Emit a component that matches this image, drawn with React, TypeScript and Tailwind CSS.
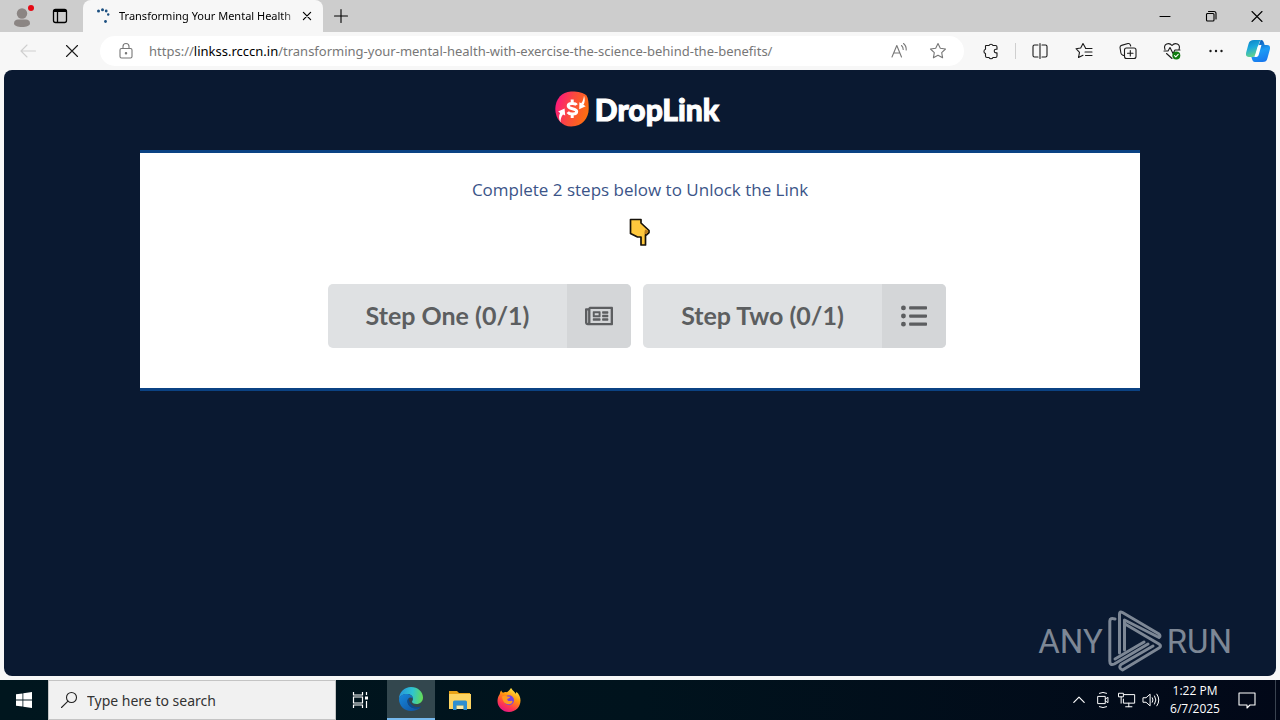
import React from 'react';
import { FaListUl, FaRegNewspaper } from 'react-icons/fa';

type IconProps = { children: React.ReactNode; size?: string };

const LineIcon: React.FC<IconProps> = ({ children, size = 'size-5' }) => (
  <svg
    viewBox="0 0 20 20"
    className={size}
    fill="none"
    stroke="currentColor"
    strokeWidth="1.1"
    strokeLinecap="round"
    strokeLinejoin="round"
    aria-hidden="true"
  >
    {children}
  </svg>
);

const star = 'M10 2.5l2.3 4.8 5.2.7-3.8 3.6.9 5.2-4.6-2.5-4.6 2.5.9-5.2L2.500 8l5.2-.7z';

const ProfileIcon = () => (
  <svg viewBox="0 0 26 26" className="size-[26px]" aria-hidden="true">
    <circle cx="12" cy="10.500" r="5.2" fill="#8b8583" />
    <path d="M4 20.500c0-3 2-4 4-4h8c2 0 4 1 4 4 0 2-3.500 3.500-8 3.500s-8-1.500-8-3.500z" fill="#8b8583" />
    <circle cx="21" cy="5" r="3" fill="#e50914" />
  </svg>
);

const Spinner = () => (
  <svg viewBox="0 0 16 16" className="size-4 shrink-0" fill="#1b4f80" aria-hidden="true">
    <circle cx="3.500" cy="3" r="1.500" />
    <circle cx="7.500" cy="1.800" r="1.500" />
    <circle cx="11.200" cy="3" r="1.400" />
    <circle cx="13.200" cy="6.500" r="1.200" />
    <circle cx="10.500" cy="13.500" r="1.400" />
  </svg>
);

const CopilotIcon = () => (
  <svg viewBox="0 0 24 24" className="size-6" aria-hidden="true">
    <defs>
      <linearGradient id="cp-a" x1="0" y1="0" x2="0.3" y2="1">
        <stop offset="0" stopColor="#0b7fc4" />
        <stop offset="0.5" stopColor="#1ba9dd" />
        <stop offset="1" stopColor="#63d28c" />
      </linearGradient>
      <linearGradient id="cp-b" x1="0.3" y1="0" x2="0.6" y2="1">
        <stop offset="0" stopColor="#0a4fae" />
        <stop offset="0.5" stopColor="#1c9bf5" />
        <stop offset="1" stopColor="#1878ee" />
      </linearGradient>
    </defs>
    <path d="M15 1c2 0 2.500 1.500 3 3l.6 2H21c3 0 3.500 2 2.700 5l-2.200 8c-.8 3-2 4-5 4H9c-2 0-2.500-1.500-3-3l-.6-2c3 0 4.200-.6 5-3.500L13 6c.6-2 .8-3.500 2-5z" fill="url(#cp-b)" />
    <path d="M8 1h7.500c-1.800.8-2.300 2.500-2.800 4.500L10.500 13c-.9 3.500-2 5-5 5H3c-3 0-3.500-2-2.700-5l2.200-8C3.300 2 5 1 8 1z" fill="url(#cp-a)" />
    <path d="M11.500 8c.3-1.200 1-2 2.200-2h1.800l-2.700 9.500c-.4 1.500-1.100 2.500-2.500 2.500H8.500z" fill="#fff" />
  </svg>
);

const DropLinkMark = () => (
  <svg viewBox="0 0 34 36" className="h-9 w-[34px]" aria-hidden="true">
    <defs>
      <linearGradient id="dl" x1="0" y1="0.2" x2="1" y2="0.5">
        <stop offset="0" stopColor="#fb1480" />
        <stop offset="0.5" stopColor="#fb4a3e" />
        <stop offset="1" stopColor="#fd6f10" />
      </linearGradient>
    </defs>
    <path d="M16 .5C22 .3 28.500 1.500 31.500 4.500c2 3 2.200 8 2.200 13.500 0 8.500-6 17.500-17.500 17.500C7 35.500.3 28 .3 18 .3 8 7 .8 16 .5z" fill="url(#dl)" />
    <path d="M29 4.500c1.200 4 1 7-.6 9.200l2.300 1.500-6.500 3 .2-7 1.800 1c1.700-2 2.500-4.300 2.800-7.700z" fill="#fff" />
    <path d="M5.500 31.500c-2-4-1.800-7-.4-9.500l-2-1.500 6.500-3 .6 7-2.200-1c-1.900 2.500-2.500 4.700-2.500 8z" fill="#fff" />
    <path d="M21.500 14c-1.200-2-8.300-2.500-8.300 1 0 3.500 8.500 2 8.500 5.500 0 3.500-7.200 3.200-9 .7M17.200 8.500v3M17.200 24v3" fill="none" stroke="#fff" strokeWidth="3" />
  </svg>
);

const PointingHand = () => (
  <svg viewBox="0 0 22 28" className="h-7 w-[22px]" role="img" aria-label="Pointing down">
    <path
      d="M1.500 1.500h10.500v3.500l8 7.500v2l-2.500 2.300h-1V27h-4.500v-8H8.500l-7-3.500z"
      fill="#ffc83d"
      stroke="#17120a"
      strokeWidth="1.700"
      strokeLinejoin="round"
    />
    <path d="M16 11.500l3.500 1.500-2 3.200-2.200-.4z" fill="#b87a1c" />
  </svg>
);

const AnyRunMark = () => (
  <svg viewBox="0 0 56 62" className="h-[62px] w-14" fill="none" stroke="currentColor" strokeWidth="3" strokeLinejoin="round" strokeLinecap="round" aria-hidden="true">
    <path d="M12.500 43V4q0-3 3-1.500L52 24q2 2 0 3.500L17.500 10v30" />
    <path d="M8 9q-5-1.500-5.200 2v40q0 5 4.500 3L41 34" />
    <path d="M8 49l29-17M46 36L14 54.500q-3 3.500 1.500 5.500L52 38q3-2 0-4L18 14" />
  </svg>
);

const EdgeIcon = () => (
  <svg viewBox="0 0 24 24" className="size-6" aria-hidden="true">
    <defs>
      <linearGradient id="ed-top" x1="0" y1="0.4" x2="1" y2="0.5">
        <stop offset="0" stopColor="#2595dc" />
        <stop offset="0.55" stopColor="#2fc4d0" />
        <stop offset="1" stopColor="#65dc55" />
      </linearGradient>
      <linearGradient id="ed-low" x1="0" y1="0" x2="1" y2="1">
        <stop offset="0" stopColor="#1688dc" />
        <stop offset="1" stopColor="#104f9d" />
      </linearGradient>
    </defs>
    <path d="M0 12C0 5 5.500 0 12 0c7 0 12 5 12 10.500 0 4-3 6.500-6.500 6.500-3 0-4.500-1.200-4.500-2.200 0-.8 1-1.200 1-3C14 9 11.500 7 8 7c-4 0-7 2-8 5z" fill="url(#ed-top)" />
    <path d="M0 12c1-3.500 4-5 7.500-5 4 0 6.500 2.500 6.500 4.800-.8-1-1.800-1.300-2.500-1.300-2 0-3 2-3 4 0 4 4 7 8.500 7 2 0 3.500-.5 4.700-1.200C19.500 23 16 24 12 24 5 24 0 18.500 0 12z" fill="url(#ed-low)" />
    <path d="M9.500 11.500c-1 .8-1.300 2-1 3.500.6 3.800 4 6.500 8.500 6.500 2 0 3.500-.5 4.700-1.300.5-.5.200-1-.4-.7-5 2-11-1.500-11.800-8z" fill="#0c4a90" />
  </svg>
);

const ExplorerIcon = () => (
  <svg viewBox="0 0 22 20" className="h-5 w-[22px]" aria-hidden="true">
    <path d="M0 1h8l2 2h11v5H0z" fill="#e8a317" />
    <path d="M0 4h22v15H0z" fill="#fcd462" />
    <path d="M4 12q0-1.500 1.500-1.500h11q1.500 0 1.500 1.500v8h-3.500v-4.500h-7V20H4z" fill="#2f8fd0" />
    <path d="M8 16h6v3H8z" fill="#fce9a6" />
  </svg>
);

const FirefoxIcon = () => (
  <svg viewBox="0 0 24 24" className="size-6" aria-hidden="true">
    <defs>
      <linearGradient id="ff" x1="0.8" y1="0" x2="0.3" y2="1">
        <stop offset="0" stopColor="#fff14f" />
        <stop offset="0.4" stopColor="#ff980e" />
        <stop offset="0.75" stopColor="#ff3750" />
        <stop offset="1" stopColor="#e31587" />
      </linearGradient>
    </defs>
    <path d="M14 0c1 1 1.600 2.300 2.800 3.300 1 1 1.400 1.600 1.600 2.400.7-.3 1-1 .9-2 2.800 2 4.200 5.500 4.200 8.800C23.500 19 18.500 24 12 24S.5 19 .5 13c0-3 1-5.300 2.300-7C2.900 5 3.300 3.500 4.300 2.500c.2 1 .8 1.700 1.700 2.200C7.300 4 8.500 4 9.700 4.200 11.500 3.500 12.500 2 14 0z" fill="url(#ff)" />
    <circle cx="12" cy="12.300" r="5" fill="#7542e5" />
    <path d="M5 8.500c2-1 4-.8 5.500 0l2.500.2c.3 1-1 1.700-2.500 2-.8 1.300.5 2.500 2 2.300 1.400-.2 2.500-.8 3 .3.200 1.500-2 3.300-4.200 3-3.500-.3-6-3.300-6.300-7.800z" fill="#ff9a1f" />
  </svg>
);

const toolbarItems = [
  {
    label: 'Split screen',
    icon: <path d="M8 4H4.500Q3 4 3 5.500v9Q3 16 4.500 16H8M12 4h3.500Q17 4 17 5.500v9q0 1.500-1.500 1.500H12M10 2.500v15" />
  },
  {
    label: 'Favorites',
    icon: <path d="M11.500 7L9 2.500 6.700 7 2 7.700l3.500 3.600-1 5.200 4.500-2.300M11.500 7.500H18M11 11h7M11.500 14.500H18" />
  },
  {
    label: 'Collections',
    icon: <path d="M5.500 14.500l-1-.5q-1.300-.5-1.600-2L2 6.500Q2 4.800 3.500 4.400L10 2.500q1.800-.3 2.300 1.300l.4 1.200M8.500 7h7.500q2 0 2 2v6.500q0 2-2 2H8.500q-2 0-2-2V9q0-2 2-2zM12.300 9.500v5.500M9.500 12.300H15" />
  }
];

const steps = [
  { label: 'Step One (0/1)', icon: <FaRegNewspaper className="size-7" /> },
  { label: 'Step Two (0/1)', icon: <FaListUl className="size-[26px]" /> }
];

const TabStrip = () => (
  <header className="flex h-8 shrink-0 items-stretch bg-[#cdcdcd] text-black">
    <button aria-label="Profile" className="flex w-[42px] items-center justify-center pl-1">
      <ProfileIcon />
    </button>
    <button aria-label="Tab actions" className="flex w-[41px] items-center pl-2">
      <svg viewBox="0 0 20 20" className="size-5" fill="none" stroke="currentColor" strokeWidth="1.300" aria-hidden="true">
        <rect x="3.500" y="3.500" width="13" height="13" rx="2" />
        <path d="M3.500 5h13" strokeWidth="2" />
        <path d="M7.500 6v10" />
      </svg>
    </button>
    <div className="flex w-60 items-center rounded-t-lg bg-[#f7f7f7] pr-1.5 pl-3">
      <Spinner />
      <span className="ml-2 flex-1 bg-linear-to-r from-black from-90% to-[#c0c0c0] bg-clip-text text-[11px] whitespace-nowrap text-transparent">
        Transforming Your Mental Health
      </span>
      <button aria-label="Close tab" className="flex size-5 shrink-0 items-center justify-center">
        <LineIcon size="size-4"><path d="M5.500 5.500l9 9M14.500 5.500l-9 9" strokeWidth="1.500" /></LineIcon>
      </button>
    </div>
    <button aria-label="New tab" className="flex w-9 items-center justify-center">
      <LineIcon><path d="M10 3.500v13M3.500 10h13" /></LineIcon>
    </button>
    <div className="ml-auto flex">
      <button aria-label="Minimize" className="flex w-[46px] items-center justify-center">
        <LineIcon><path d="M5 10.500h10" /></LineIcon>
      </button>
      <button aria-label="Restore" className="flex w-[46px] items-center justify-center">
        <LineIcon><path d="M6 7.500h6q1 0 1 1v5.500q0 1-1 1H6.500q-1 0-1-1V8.500q0-1 1-1M7.500 5.500H13q2 0 2 2V13" /></LineIcon>
      </button>
      <button aria-label="Close window" className="flex w-[46px] items-center justify-center">
        <LineIcon><path d="M5 5.500l10 10M15 5.500l-10 10" /></LineIcon>
      </button>
    </div>
  </header>
);

const Toolbar = () => (
  <nav className="flex h-[38px] shrink-0 items-center bg-[#f7f7f7] pr-0.5 pl-1.5 text-[#1b1b1b]">
    <button aria-label="Back" className="flex w-11 justify-center text-[#cfcfcf]">
      <LineIcon><path d="M17.500 10H3M9 4l-6 6 6 6" /></LineIcon>
    </button>
    <button aria-label="Stop loading" className="flex w-11 justify-center">
      <LineIcon><path d="M4.500 4.500l11 11M15.500 4.500l-11 11" /></LineIcon>
    </button>
    <div className="ml-1.5 flex h-[30px] min-w-0 flex-1 items-center rounded-full bg-white px-4 text-[#777]">
      <LineIcon>
        <path d="M5.500 7.500h9q1.500 0 1.500 1.500v6.500q0 1.500-1.500 1.500h-9Q4 17 4 15.500V9q0-1.500 1.500-1.500zM7 7.500V5.500a3 3 0 0 1 6 0v2" />
        <circle cx="10" cy="12.200" r="0.700" fill="currentColor" />
      </LineIcon>
      <a href="#page" className="ml-[13px] min-w-0 flex-1 overflow-hidden text-[13px] leading-5 whitespace-nowrap">
        https://<span className="text-black">linkss.rcccn.in</span>/transforming-your-mental-health-with-exercise-the-science-behind-the-benefits/
      </a>
      <button aria-label="Read aloud" className="flex w-10 justify-center">
        <LineIcon><path d="M2 16L6.800 4.500 11.500 16M3.700 12h6.200M11.500 4.500q1.700 1.500 1.700 4M13.500 2.500q3 2.500 2.700 6.500" /></LineIcon>
      </button>
      <button aria-label="Add to favorites" className="ml-2 flex w-5 justify-center">
        <LineIcon><path d={star} /></LineIcon>
      </button>
    </div>
    <button aria-label="Extensions" className="ml-[5px] flex w-11 justify-center">
      <LineIcon><path d="M5 4.500h3a2.200 2.200 0 0 1 4 0h2.500q1.500 0 1.500 1.500v2.300h-1a1.800 1.800 0 0 0 0 3.600h1V15q0 1.500-1.500 1.500H12a2.200 2.200 0 0 1-4 0H6q-1.500 0-1.500-1.500v-2.500a2.200 2.200 0 0 1 0-4.200V5q0-.5.500-.5z" /></LineIcon>
    </button>
    <span className="mx-0.5 h-4 w-px bg-[#cfcfcf]" />
    {toolbarItems.map((item) => (
      <button key={item.label} aria-label={item.label} className="flex w-11 justify-center">
        <LineIcon>{item.icon}</LineIcon>
      </button>
    ))}
    <button aria-label="Browser essentials" className="flex w-11 justify-center">
      <LineIcon>
        <path d="M3 8.500C1 3 7 .8 10 4.500 13 .8 19 3 17 8.500M2 10h4l2-3.500 3 6 2-3.500h5M4.500 12.500L10 17.500" />
        <circle cx="14.300" cy="14.500" r="4" fill="#107c10" stroke="none" />
        <path d="M12.500 14.700l1.300 1.200 2.400-2.500" stroke="#fff" />
      </LineIcon>
    </button>
    <button aria-label="Settings and more" className="flex w-11 justify-center">
      <svg viewBox="0 0 20 20" className="size-5" fill="currentColor" aria-hidden="true">
        <circle cx="4.500" cy="10" r="1.200" /><circle cx="10" cy="10" r="1.200" /><circle cx="15.500" cy="10" r="1.200" />
      </svg>
    </button>
    <button aria-label="Copilot" className="flex w-10 justify-center">
      <CopilotIcon />
    </button>
  </nav>
);

const Taskbar = () => (
  <footer className="flex h-10 shrink-0 items-stretch bg-linear-to-r from-[#00161e] via-[#00131d] to-[#020818] text-white">
    <button aria-label="Start" className="flex w-12 items-center justify-center">
      <svg viewBox="0 0 16 16" className="size-4" fill="currentColor" aria-hidden="true">
        <path d="M0 2.300l6.500-.9v6.100H0zM7.300 1.300L16 0v7.500H7.300zM0 8.500h6.500v6.100L0 13.700zM7.300 8.500H16V16l-8.700-1.300z" />
      </svg>
    </button>
    <label className="flex w-72 items-center border border-[#c4c4c4] bg-[#f1f1f1] pl-2.5 text-[#222]">
      <LineIcon><circle cx="12.500" cy="7.500" r="5" /><path d="M9 11.200L2.500 17.500" /></LineIcon>
      <input
        type="text"
        aria-label="Search"
        placeholder="Type here to search"
        className="ml-2 min-w-0 flex-1 bg-transparent text-[14px] outline-none placeholder:text-[#333]"
      />
    </label>
    <div className="flex gap-px">
      <button aria-label="Task view" className="mr-0.5 flex w-12 items-center justify-center">
        <svg viewBox="0 0 18 18" className="size-[18px]" fill="none" stroke="currentColor" strokeWidth="1.200" aria-hidden="true">
          <path d="M2.500 1v3h9V1M2.500 17v-3h9v3M2.500 6h9v6h-9zM15.500 1v3M15.500 10v7" />
          <path d="M14 5.500h3v3h-3z" fill="currentColor" stroke="none" />
        </svg>
      </button>
      <button aria-label="Microsoft Edge" className="flex w-12 items-center justify-center border-b-2 border-[#76b9ed] bg-[#33474e]">
        <EdgeIcon />
      </button>
      <button aria-label="File Explorer" className="flex w-12 items-center justify-center"><ExplorerIcon /></button>
      <button aria-label="Firefox" className="flex w-12 items-center justify-center"><FirefoxIcon /></button>
    </div>
    <div className="ml-auto flex items-stretch">
      <button aria-label="Show hidden icons" className="flex w-6 items-center justify-center">
        <LineIcon size="size-4"><path d="M3.500 13L10 6.500l6.500 6.500" strokeWidth="1.500" /></LineIcon>
      </button>
      <button aria-label="Meet now" className="flex w-6 items-center justify-center">
        <LineIcon size="size-[18px]"><path d="M6 2.500q4-2 8 0M6 17.500q4 2 8 0M4.500 6h8v8h-8zM12.500 9l3-2v6l-3-2" /></LineIcon>
      </button>
      <button aria-label="Network" className="flex w-6 items-center justify-center">
        <LineIcon size="size-[18px]"><path d="M7 4h11.500v9.500H6V9M12 13.500v4M8.500 17.500h7M1 2.500h5v4H1zM3.500 6.500v7" /></LineIcon>
      </button>
      <button aria-label="Volume" className="flex w-6 items-center justify-center">
        <LineIcon size="size-[18px]"><path d="M1.500 7.500h3L9 3.500v13L4.500 12.500h-3zM11.500 7.500q1.500 2.500 0 5M14 5.500q3 4.500 0 9M16.500 3.500q4.500 6.500 0 13" /></LineIcon>
      </button>
      <time className="flex w-16 flex-col justify-center text-center font-['Open_Sans',sans-serif] text-xs leading-[18px]">
        <span>1:22 PM</span>
        <span>6/7/2025</span>
      </time>
      <button aria-label="Notifications" className="flex w-10 items-center justify-center">
        <LineIcon><path d="M2 3h16v12h-5l-3 3v-3H2z" /></LineIcon>
      </button>
      <span className="mr-1 ml-2 w-px bg-[#3a4350]" />
    </div>
  </footer>
);

const App: React.FC = () => {
  return (
    <div className="flex h-screen flex-col overflow-hidden bg-[#f7f7f7] font-['Noto_Sans',sans-serif]">
      <TabStrip />
      <Toolbar />

      <main id="page" className="relative mx-1 mb-1 flex-1 overflow-hidden rounded-lg bg-[#0a1931] font-[Lato,sans-serif]">
        <div className="flex h-20 items-center justify-center gap-1.5 pr-1.5 pb-0.5">
          <DropLinkMark />
          <h1 className="text-[30px] leading-9 font-black text-white [-webkit-text-stroke:1px_white]">DropLink</h1>
        </div>

        <section className="mx-auto flex max-w-[1000px] flex-col items-center border-y-[3px] border-[#0b4283] bg-white pt-[25px] pb-10">
          <p className="font-['Open_Sans',sans-serif] text-[17px] leading-6 font-medium text-[#3b5488]">Complete 2 steps below to Unlock the Link</p>
          <div className="mt-4"><PointingHand /></div>
          <div className="mt-[38px] flex flex-wrap justify-center gap-3 pr-1.5">
            {steps.map((step) => (
              <button key={step.label} className="flex h-16 overflow-hidden rounded-[5px] bg-[#dfe1e3] text-[25px] font-bold text-[#5c5e60]">
                <span className="flex w-[239px] items-center justify-center">{step.label}</span>
                <span className="flex w-16 items-center justify-center bg-[#d4d6d8]">{step.icon}</span>
              </button>
            ))}
          </div>
        </section>

        <div className="absolute right-11 bottom-1 flex items-center gap-1 font-[Roboto,sans-serif] text-[33px] leading-none text-[#7d8795]">
          <span>ANY</span>
          <AnyRunMark />
          <span>RUN</span>
        </div>
      </main>

      <Taskbar />
    </div>
  );
};

export default App;
